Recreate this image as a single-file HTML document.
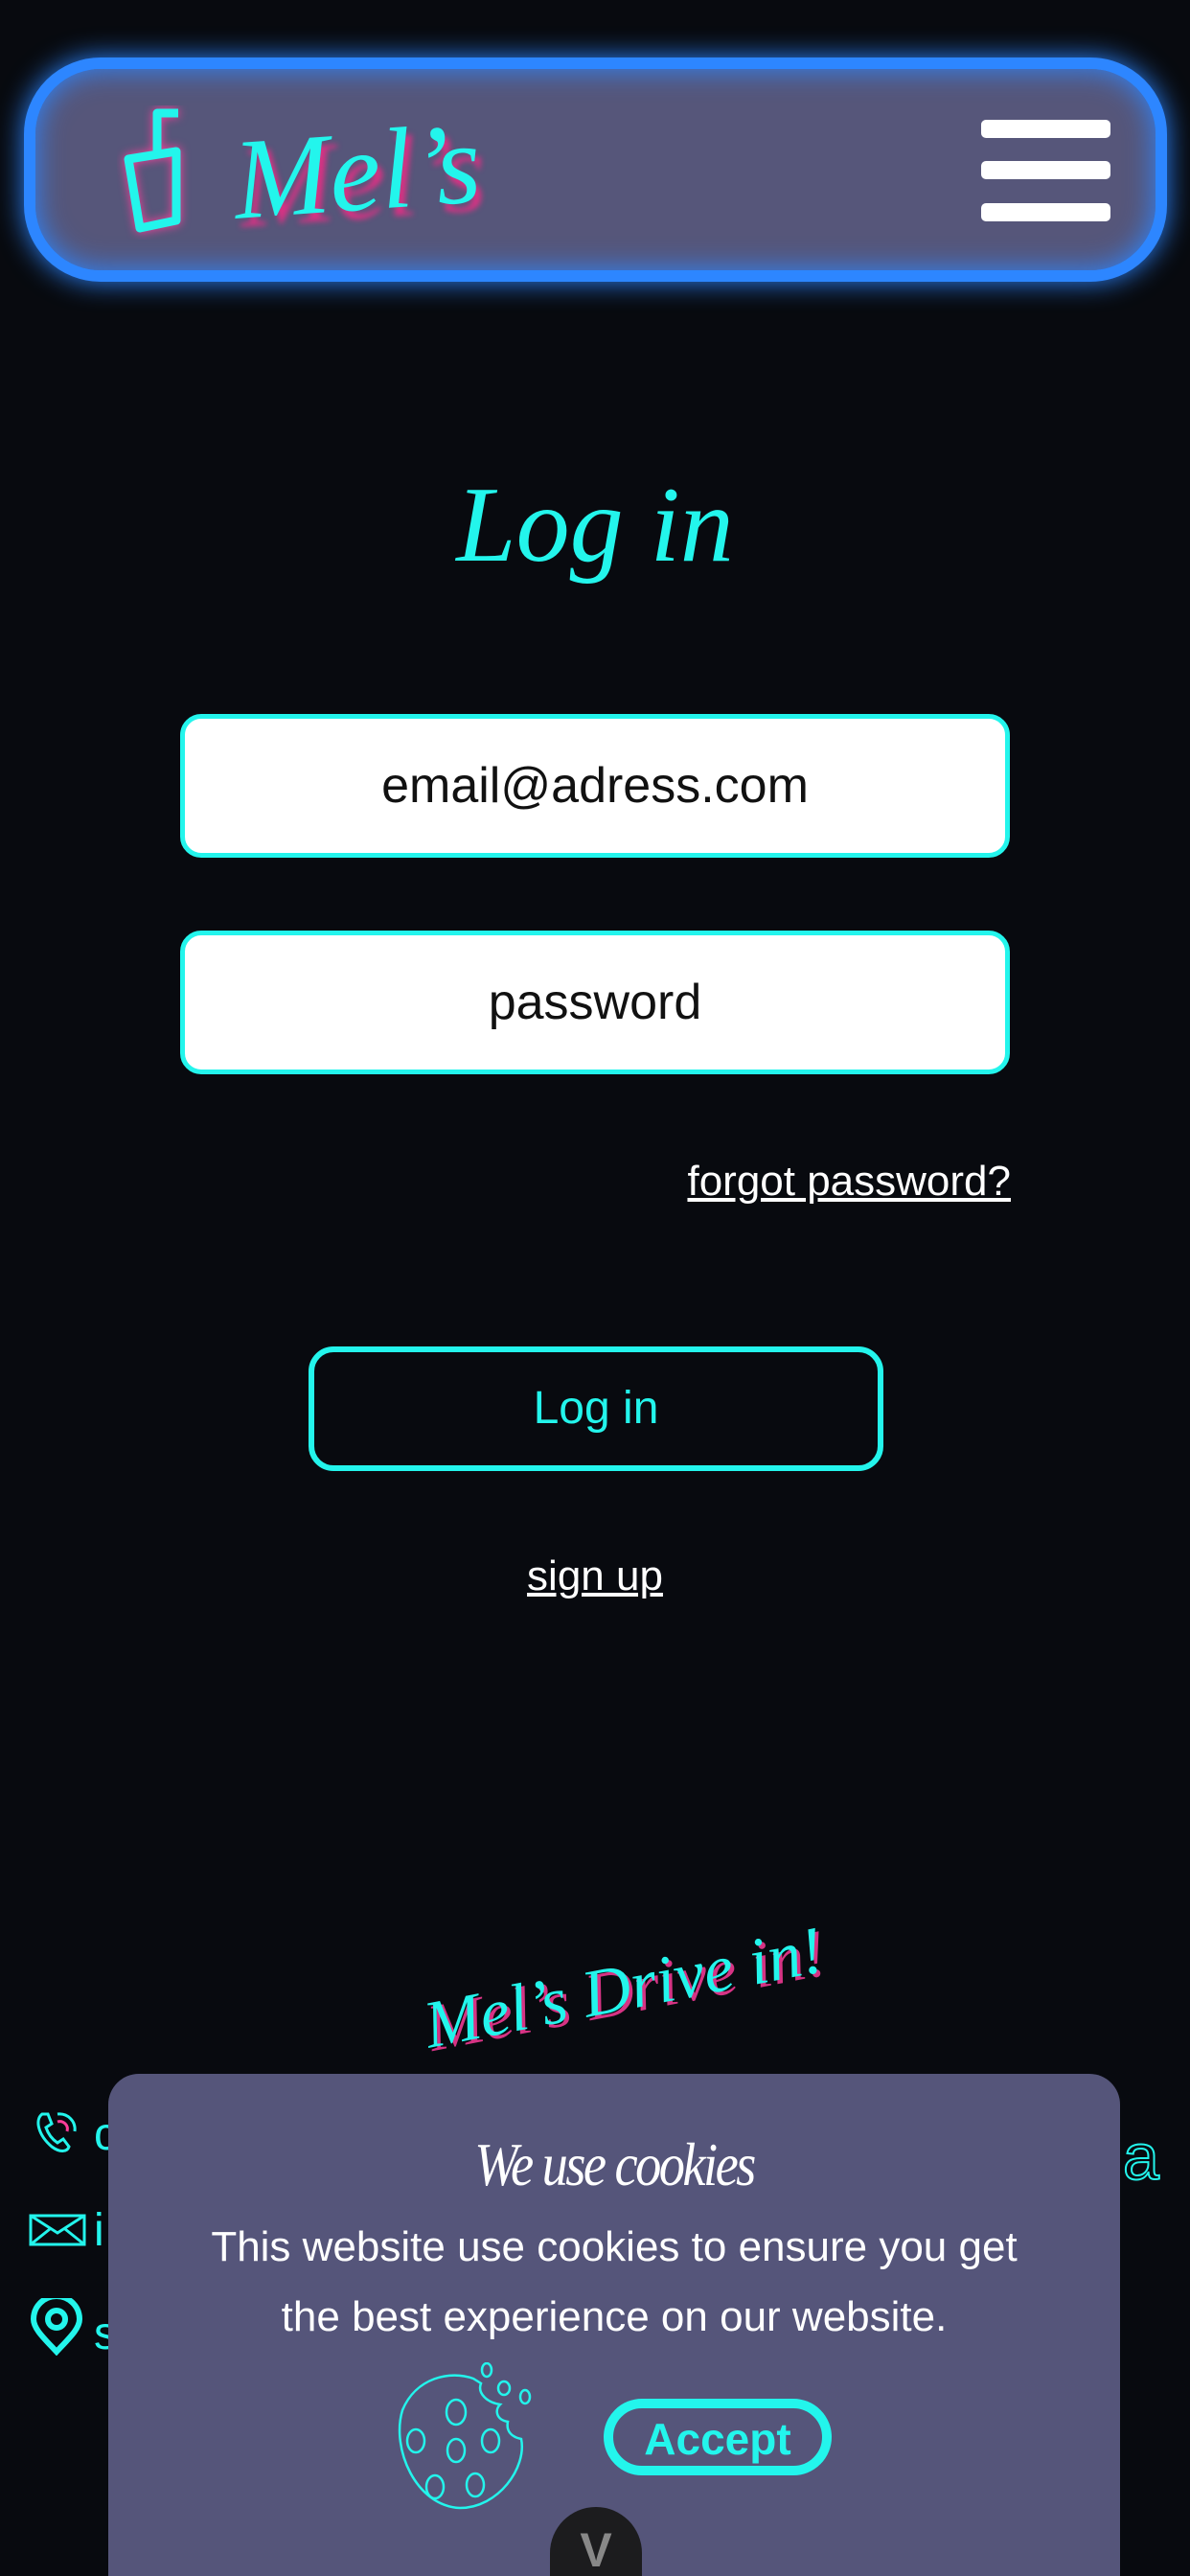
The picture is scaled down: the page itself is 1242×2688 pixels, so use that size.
<!DOCTYPE html>
<html><head><meta charset="utf-8">
<style>
*{margin:0;padding:0;box-sizing:border-box}
html,body{width:1242px;height:2688px;background:#080a0f;overflow:hidden;font-family:"Liberation Sans",sans-serif;position:relative}
.abs{position:absolute}
.nav{left:25px;top:60px;width:1193px;height:234px;border:12px solid #2d86ff;border-radius:80px;background:#56567a;box-shadow:0 0 28px #2d86ff, inset 0 0 30px #2d86ff}
.bar{left:1024px;width:135px;height:19px;background:#fff;border-radius:5px}
.script{font-family:"Liberation Serif",serif;font-style:italic;color:#23f5ec;white-space:nowrap}
.inp{left:188px;width:866px;height:150px;border:5px solid #23f5ec;border-radius:22px;background:#fff;color:#111;font-size:52px;text-align:center;line-height:140px}
.cy{color:#23f5ec}
</style></head><body>
<div class="abs nav"></div>
<svg class="abs" style="left:122px;top:110px" width="80" height="140" viewBox="0 0 80 140">
<g fill="none" stroke="#23f5ec" stroke-width="9" stroke-linejoin="round" style="filter:drop-shadow(0 0 5px #ff3d9a)">
<path d="M64 8 H42 V52"/><path d="M12 56 L24 128 L62 120 L62 48 Z"/></g></svg>
<div class="abs script" style="left:244px;top:118px;font-size:120px;line-height:140px;text-shadow:5px 9px 6px #d63384;transform:rotate(-4deg);transform-origin:left">Mel’s</div>
<div class="abs bar" style="top:125px"></div>
<div class="abs bar" style="top:168px"></div>
<div class="abs bar" style="top:212px"></div>

<div class="abs script" style="left:0;width:1242px;text-align:center;top:478px;font-size:112px;line-height:140px">Log in</div>
<div class="abs inp" style="top:745px">email@adress.com</div>
<div class="abs inp" style="top:971px">password</div>
<div class="abs" style="right:187px;top:1208px;color:#fff;font-size:44px;text-decoration:underline">forgot password?</div>
<div class="abs cy" style="left:322px;top:1405px;width:600px;height:130px;border:6px solid #23f5ec;border-radius:26px;text-align:center;line-height:118px;font-size:48px">Log in</div>
<div class="abs" style="left:0;width:1242px;text-align:center;top:1620px;color:#fff;font-size:44px;text-decoration:underline">sign up</div>

<div class="abs script" style="left:401px;top:2025px;width:500px;text-align:center;font-size:70px;line-height:100px;transform:rotate(-11deg);text-shadow:3px 4px 0 #d63384">Mel’s Drive in!</div>

<svg class="abs" style="left:34px;top:2200px" width="52" height="48" viewBox="0 0 52 48"><path d="M10 6 C2 12 6 28 20 40 C28 46 36 46 38 40 L32 32 L26 36 C20 32 16 26 14 20 L20 16 L16 6 Z" fill="none" stroke="#23f5ec" stroke-width="3"/><path d="M26 6 A16 16 0 0 1 44 24" fill="none" stroke="#23f5ec" stroke-width="3"/><path d="M26 14 A8 8 0 0 1 36 24" fill="none" stroke="#ff3d9a" stroke-width="3"/></svg>
<div class="abs cy" style="left:98px;top:2200px;font-size:48px">c</div>
<svg class="abs" style="left:30px;top:2310px" width="60" height="34"><rect x="2" y="2" width="56" height="30" fill="none" stroke="#23f5ec" stroke-width="3"/><path d="M2 2 L30 20 L58 2 M2 32 L22 16 M58 32 L38 16" fill="none" stroke="#23f5ec" stroke-width="3"/></svg>
<div class="abs cy" style="left:98px;top:2300px;font-size:48px">i</div>
<svg class="abs" style="left:30px;top:2398px" width="58" height="60" viewBox="0 0 58 60"><path d="M29 56 C16 42 5 32 5 22 A24 24 0 0 1 53 22 C53 32 42 42 29 56 Z" fill="none" stroke="#23f5ec" stroke-width="6"/><circle cx="29" cy="22" r="9" fill="none" stroke="#23f5ec" stroke-width="6"/></svg>
<div class="abs cy" style="left:98px;top:2408px;font-size:48px">s</div>
<div class="abs" style="left:1172px;top:2212px;font-size:68px;color:transparent;-webkit-text-stroke:2px #23f5ec">a</div>

<div class="abs" style="left:113px;top:2164px;width:1056px;height:560px;background:#55557a;border-radius:32px"></div>
<div class="abs" style="left:113px;width:1056px;text-align:center;top:2222px;color:#fff;font-family:'Liberation Serif',serif;font-style:italic;font-size:64px;letter-spacing:-3px;transform:scaleX(.85)">We use cookies</div>
<div class="abs" style="left:113px;width:1056px;text-align:center;top:2308px;color:#fff;font-size:44px;line-height:73px">This website use cookies to ensure you get<br>the best experience on our website.</div>
<svg class="abs" style="left:410px;top:2465px" width="150" height="155" viewBox="0 0 150 155"><g fill="none" stroke="#23f5ec" stroke-width="2.5"><path d="M84 17 C60 8 24 16 10 50 C-2 90 24 150 70 152 C110 152 140 110 134 80 C124 78 118 72 120 62 C108 60 106 50 112 44 C98 42 88 32 92 22 Z"/><ellipse cx="66" cy="52" rx="10" ry="13"/><ellipse cx="24" cy="82" rx="9" ry="12"/><ellipse cx="66" cy="92" rx="9" ry="12"/><ellipse cx="102" cy="82" rx="9" ry="12"/><ellipse cx="44" cy="130" rx="9" ry="12"/><ellipse cx="86" cy="128" rx="9" ry="12"/><ellipse cx="98" cy="8" rx="5" ry="7"/><ellipse cx="116" cy="27" rx="6" ry="7"/><ellipse cx="138" cy="36" rx="5" ry="7"/></g></svg>
<div class="abs cy" style="left:630px;top:2503px;width:238px;height:80px;border:10px solid #23f5ec;border-radius:40px;text-align:center;line-height:64px;font-size:46px;font-weight:bold">Accept</div>
<div class="abs" style="left:574px;top:2616px;width:96px;height:90px;background:#1c1c1e;border-radius:48px 48px 0 0;color:#888;font-size:50px;font-weight:bold;text-align:center;line-height:90px">V</div>
</body></html>
